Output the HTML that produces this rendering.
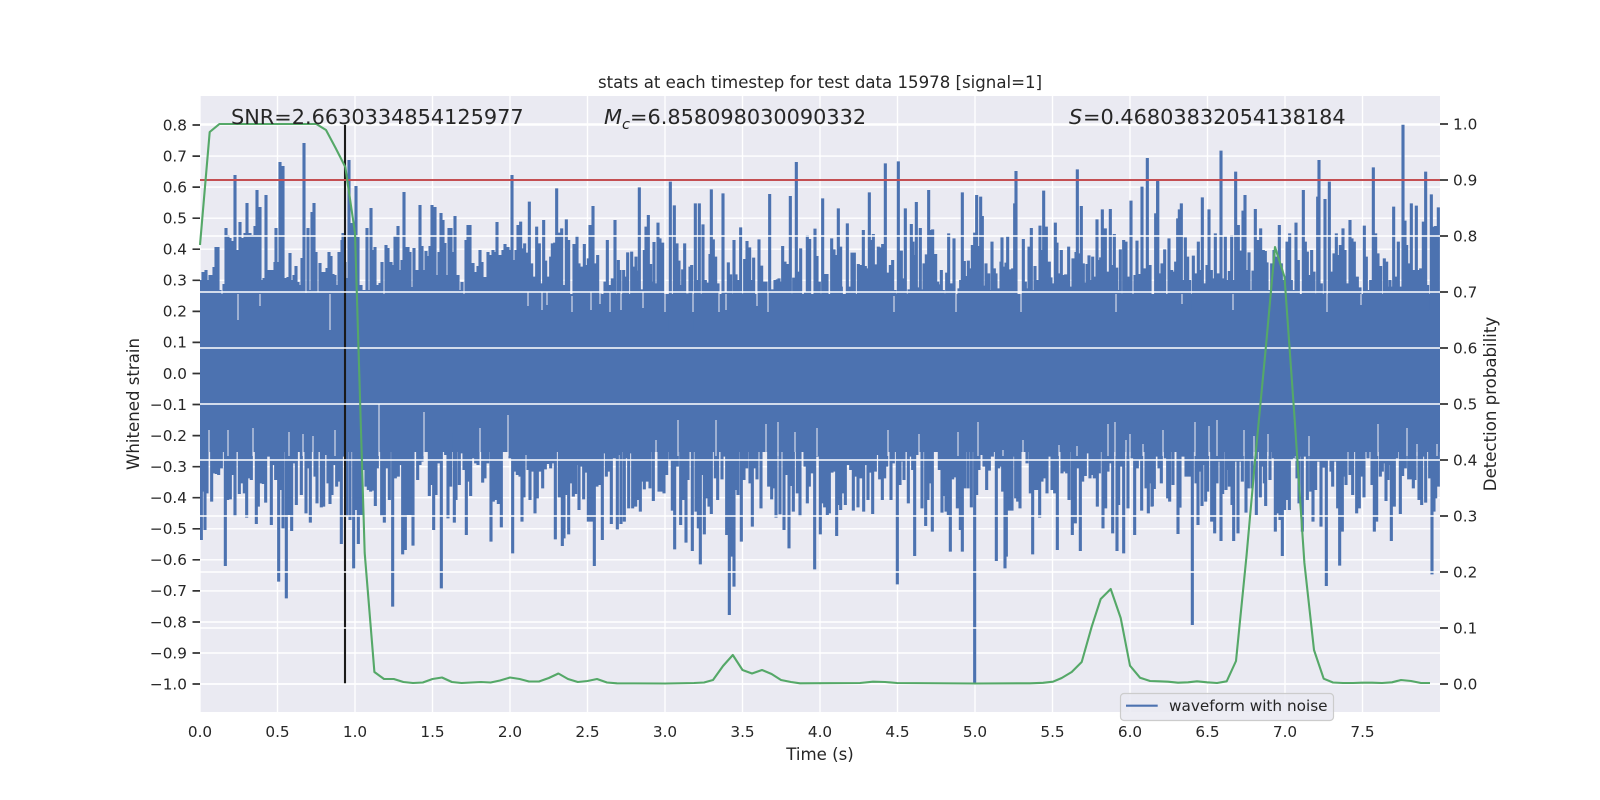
<!DOCTYPE html>
<html><head><meta charset="utf-8"><style>
html,body{margin:0;padding:0;background:#fff}
svg{display:block}
text{font-family:"DejaVu Sans",sans-serif;fill:#262626}
.tl{font-size:15.28px}
.lab{font-size:16.6px}
.big{font-size:20.83px}
</style></head><body>
<svg width="1600" height="800" viewBox="0 0 1600 800" xmlns="http://www.w3.org/2000/svg">
<defs><clipPath id="ax"><rect x="200" y="96" width="1240" height="616"/></clipPath></defs>
<rect width="1600" height="800" fill="#fff"/>
<rect x="200" y="96" width="1240" height="616" fill="#eaeaf2"/>
<path stroke="#fff" stroke-width="1.4" fill="none" d="M200 125H1440M200 156.100H1440M200 187.100H1440M200 218.200H1440M200 249.200H1440M200 280.300H1440M200 311.400H1440M200 342.400H1440M200 373.500H1440M200 404.500H1440M200 435.600H1440M200 466.700H1440M200 497.700H1440M200 528.800H1440M200 559.800H1440M200 590.900H1440M200 622H1440M200 653H1440M200 684H1440M200 96V712M277.500 96V712M355 96V712M432.500 96V712M510 96V712M587.500 96V712M665 96V712M742.500 96V712M820 96V712M897.500 96V712M975 96V712M1052.500 96V712M1130 96V712M1207.500 96V712M1285 96V712M1362.500 96V712"/>
<g clip-path="url(#ax)">
<rect x="200" y="294" width="1240" height="158" fill="#4c72b0"/>
<path stroke="#4c72b0" stroke-width="3.1" fill="none" d="M201 280V310M203 272V310M206 270V310M208 280V310M210 275V310M212 275V310M214 267V310M216 247V310M218 247V310M220 290V310M222 297V310M224 284V310M226 228V310M228 235V310M230 238V310M232 241V310M235 175V310M237 250V310M240 222V310M242 238V310M245 233V310M247 203V310M250 233V310M253 235V310M255 226V310M257 190V310M259 260V310M260 207V310M262 280V310M264 278V310M266 195V310M268 270V310M271 270V310M273 270V310M275 262V310M276 228V310M279 262V310M280 162V310M283 166V310M286 278V310M288 277V310M290 253V310M292 280V310M294 275V310M296 266V310M298 282V310M300 285V310M302 258V310M304 143V310M306 293V310M308 228V310M310 290V310M312 212V310M314 203V310M316 252V310M318 292V310M320 263V310M322 272V310M325 272V310M327 268V310M329 252V310M331 256V310M333 274V310M335 275V310M337 285V310M339 252V310M342 240V310M343 233V310M345 262V310M347 278V310M349 160V310M352 223V310M354 230V310M356 186V310M358 237V310M361 285V310M364 290V310M367 228V310M369 290V310M371 208V310M373 250V310M375 247V310M378 285V310M380 283V310M382 262V310M384 295V310M386 245V310M388 248V310M391 262V310M393 265V310M395 236V310M398 226V310M400 270V310M402 260V310M404 192V310M406 247V310M408 247V310M410 252V310M412 287V310M414 248V310M416 270V310M418 270V310M420 205V310M422 246V310M424 270V310M426 251V310M428 256V310M430 246V310M432 205V310M435 207V310M437 275V310M439 252V310M441 213V310M443 220V310M445 243V310M447 275V310M449 228V310M451 228V310M453 252V310M455 216V310M458 275V310M460 290V310M462 282V310M464 302V310M466 240V310M468 225V310M470 225V310M473 263V310M475 272V310M478 266V310M480 250V310M482 262V310M485 277V310M488 252V310M491 255V310M493 250V310M495 252V310M497 222V310M500 255V310M503 250V310M505 244V310M508 247V310M510 250V310M512 175V310M514 260V310M516 250V310M518 225V310"/>
<g transform="translate(520,130) scale(.33333)"><path stroke="#4c72b0" stroke-width="9.3" fill="none" d="M2 275V600M8 355V600M14 340V600M20 368V600M28 215V600M35 400V600M41 440V600M50 290V600M58 340V600M64 460V600M71 270V600M77 392V600M85 440V600M92 380V600M97 340V600M104 338V600M110 175V600M118 308V600M125 295V600M131 465V600M139 268V600M146 330V600M155 500V600M162 342V600M171 316V600M177 400V600M184 410V600M193 342V600M199 405V600M205 385V600M210 285V600M219 228V600M226 400V600M233 375V600M240 490V600M247 518V600M255 455V600M262 330V600M268 465V600M277 445V600M285 270V600M295 390V600M300 420V600M311 420V600M316 440V600M323 367V600M335 365V600M341 410V600M348 380V600M354 422V600M358 172V600M366 478V600M373 360V600M378 290V600M385 255V600M392 402V600M396 455V600M402 336V600M408 460V600M414 278V600M420 325V600M428 338V600M440 535V600M451 155V600M463 226V600M471 340V600M477 392V600M482 465V600M488 418V600M494 340V600M502 490V600M510 410V600M515 405V600M526 220V600M531 450V600M538 220V600M549 283V600M556 450V600M562 458V600M570 372V600M574 178V600M580 328V600M587 380V600M594 460V600M609 190V600M616 485V600M625 397V600M632 433V600M642 330V600M648 433V600M655 450V600M662 292V600M668 490V600M674 387V600M681 333V600M689 352V600M695 450V600M701 383V600M708 495V600M717 328V600M725 407V600M733 455V600M738 455V600M749 192V600M756 478V600M765 450V600M772 448V600M777 445V600M782 455V600M788 348V600M795 395V600M803 402V600M811 198V600M821 443V600M829 96V600M836 425V600M842 355V600M849 498V600M856 485V600M862 315V600M869 327V600M885 296V600M891 378V600M898 455V600M908 205V600M916 432V600M921 432V600M928 505V600M935 325V600M942 358V600M949 375V600M955 235V600"/></g>
<g transform="translate(840,130) scale(.33333)"><path stroke="#4c72b0" stroke-width="9.3" fill="none" d="M2 350V600M4 470V600M12 530V600M22 280V600M29 470V600M36 368V600M43 368V600M55 402V600M62 405V600M70 300V600M76 408V600M81 415V600M88 187V600M93 330V600M100 312V600M105 495V600M109 403V600M115 350V600M122 352V600M128 342V600M136 100V600M144 428V600M151 405V600M158 390V600M165 480V600M175 94V600M184 362V600M190 445V600M196 235V600M207 478V600M214 282V600M219 335V600M222 375V600M229 216V600M235 472V600M241 294V600M246 478V600M252 400V600M259 373V600M266 180V600M271 300V600M278 298V600M287 372V600M293 455V600M298 463V600M304 420V600M310 480V600M320 428V600M326 310V600M333 460V600M342 325V600M348 530V600M357 475V600M362 450V600M367 187V600M373 393V600M379 438V600M385 392V600M391 415V600M397 345V600M404 308V600M410 195V600M416 348V600M422 200V600M427 258V600M432 467V600M438 400V600M446 430V600M451 480V600M456 335V600M463 415V600M468 430V600M474 475V600M483 395V600M486 322V600M493 410V600M498 398V600M503 320V600M509 418V600M518 415V600M524 220V600M528 123V600M534 500V600M540 495V600M550 327V600M556 455V600M561 475V600M567 350V600M574 294V600M580 480V600M585 408V600M594 450V600M600 287V600M606 360V600M611 182V600M619 290V600M628 395V600M633 442V600M637 460V600M646 278V600M651 338V600M657 430V600M664 360V600M670 435V600M677 433V600M686 350V600M692 470V600M699 385V600M708 366V600M712 118V600M718 370V600M724 228V600M730 400V600M736 458V600M741 402V600M747 376V600M752 450V600M758 380V600M765 440V600M771 268V600M777 390V600M782 382V600M787 238V600M796 295V600M802 425V600M811 237V600M817 405V600M823 312V600M830 413V600M835 480V600M841 358V600M851 330V600M858 335V600M865 440V600M873 212V600M885 435V600M891 332V600M899 432V600M906 170V600M913 415V600M922 84V600M930 405V600M938 498V600M947 250V600M953 155V600M958 430V600"/></g>
<g transform="translate(1150,90) scale(.33333)"><path stroke="#4c72b0" stroke-width="9.3" fill="none" d="M0 525V660M6 615V660M18 370V660M23 270V660M30 610V660M36 520V660M44 478V660M50 630V660M57 445V660M65 540V660M72 545V660M77 515V660M83 385V660M88 358V660M94 340V660M100 570V660M106 442V660M113 500V660M119 570V660M130 497V660M136 550V660M145 455V660M150 540V660M157 322V660M165 580V660M171 525V660M177 358V660M184 540V660M190 565V660M196 430V660M205 550V660M213 182V660M219 565V660M226 440V660M231 570V660M238 543V660M245 435V660M250 570V660M257 245V660M265 405V660M272 482V660M279 362V660M285 315V660M290 540V660M297 487V660M303 600V660M309 542V660M316 357V660M323 450V660M332 415V660M340 480V660M346 483V660M351 517V660M358 600V660M365 520V660M372 480V660M379 500V660M388 405V660M394 520V660M403 570V660M411 455V660M419 430V660M424 570V660M430 600V660M438 398V660M445 510V660M450 640V660M460 300V660M466 455V660M472 485V660M478 555V660M485 480V660M492 545V660M498 610V660M503 320V660M507 210V660M514 580V660M525 327V660M531 650V660M538 275V660M546 545V660M552 490V660M559 430V660M565 495V660M571 465V660M579 415V660M585 480V660M592 580V660M600 390V660M606 445V660M613 455V660M622 560V660M630 592V660M636 650V660M643 407V660M649 500V660M655 600V660M662 570V660M670 232V660M677 430V660M684 490V660M692 528V660M698 620V660M703 505V660M710 515V660M715 590V660M720 570V660M725 590V660M731 350V660M737 560V660M745 455V660M752 590V660M759 102V660M765 392V660M770 465V660M776 520V660M784 340V660M790 540V660M799 347V660M805 540V660M812 535V660M820 395V660M827 245V660M833 585V660M844 313V660M850 410V660M857 408V660M863 522V660M865 352V660"/></g>
<g transform="translate(120,400) scale(.33333)"><path stroke="#4c72b0" stroke-width="9.3" fill="none" d="M244 420V100M249 275V100M255 390V100M261 280V100M267 140V100M275 305V100M283 220V100M289 222V100M296 225V100M304 205V100M316 498V100M323 300V100M331 298V100M338 225V100M345 350V100M351 155V100M358 282V100M367 250V100M373 280V100M380 353V100M387 235V100M394 240V100M400 130V100M409 372V100M415 320V100M424 250V100M430 252V100M437 308V100M445 170V100M454 375V100M461 195V100M467 240V100M476 545V100M482 270V100M489 385V100M499 595V100M507 345V100M515 393V100M522 190V100M529 315V100M536 135V100M544 285V100M550 110V100M558 340V100M564 205V100M571 368V100M578 120V100M585 230V100M591 310V100M597 145V100M604 322V100M611 320V100M618 165V100M624 250V100M630 312V100M636 285V100M642 195V100M650 260V100M657 245V100M664 432V100M671 170V100M680 350V100M690 360V100M701 505V100M708 330V100M715 432V100M723 345V100M730 210V100M738 260V100M745 270V100M752 275V100M759 272V100M766 318V100M772 205V100M785 350V100M793 368V100M800 205V100M808 300V100M818 620V100M826 235V100M835 230V100M840 195V100M848 463V100M856 450V100M864 345V100M871 345V100M879 437V100M886 135V100M893 240V100M900 195V100M906 185V100M918 100V100M928 288V100M934 255V100M941 390V100M948 285V100M955 190V100M964 565V100M971 155V100M977 165V100M984 355V100M992 260V100M1003 368V100M1008 300V100M1018 255V100M1025 160V100M1032 210V100M1039 405V100M1046 245V100M1052 288V100M1060 175V100M1067 190V100M1074 195V100M1080 135V100M1088 248V100M1095 235V100M1103 190V100M1113 425V100M1120 305V100M1127 300V100M1135 312V100M1144 382V100M1155 120V100M1170 175V100M1178 460V100M1185 215V100M1192 225V100"/></g>
<g transform="translate(520,420) scale(.33333)"><path stroke="#4c72b0" stroke-width="9.3" fill="none" d="M0 170V40M6 305V40M12 232V40M20 105V40M24 150V40M30 240V40M36 155V40M45 280V40M52 235V40M60 155V40M68 205V40M76 148V40M84 132V40M92 145V40M98 130V40M106 358V40M113 60V40M118 232V40M127 378V40M132 355V40M139 225V40M146 343V40M152 190V40M160 230V40M167 222V40M172 135V40M177 270V40M184 140V40M191 238V40M198 158V40M205 305V40M214 305V40M223 438V40M231 200V40M240 195V40M247 360V40M254 100V40M259 170V40M265 155V40M274 312V40M283 115V40M292 328V40M298 105V40M303 312V40M313 305V40M318 115V40M326 265V40M331 100V40M338 265V40M347 260V40M354 240V40M361 275V40M367 185V40M373 208V40M382 185V40M390 205V40M400 243V40M407 72V40M417 215V40M425 215V40M432 220V40M440 165V40M450 120V40M457 272V40M464 388V40M472 140V40M482 315V40M489 240V40M498 368V40M504 180V40M517 393V40M523 80V40M528 275V40M535 325V40M541 433V40M548 165V40M553 343V40M560 235V40M567 260V40M574 282V40M582 90V40M586 175V40M593 240V40M600 92V40M606 178V40M612 110V40M620 345V40M628 585V40M634 410V40M642 500V40M648 210V40M654 225V40M664 365V40M672 180V40M680 145V40M690 190V40M697 320V40M705 145V40M711 178V40M716 60V40M723 265V40M733 38V40M738 90V40M746 200V40M755 238V40M762 205V40M768 293V40M780 283V40M787 75V40M792 330V40M798 165V40M807 385V40M813 198V40M820 275V40M826 45V40M832 220V40M840 290V40M847 85V40M855 140V40M862 250V40M868 200V40M876 160V40M884 448V40M892 110V40M901 343V40M908 250V40M914 262V40M922 285V40M928 280V40M936 158V40M942 155V40M950 348V40M956 255V40"/></g>
<g transform="translate(840,420) scale(.33333)"><path stroke="#4c72b0" stroke-width="9.3" fill="none" d="M2 270V40M8 220V40M16 255V40M24 135V40M32 150V40M40 272V40M46 170V40M54 262V40M63 175V40M71 275V40M77 135V40M84 240V40M91 158V40M98 282V40M106 155V40M112 105V40M119 178V40M127 240V40M134 175V40M140 140V40M146 90V40M153 240V40M160 130V40M166 85V40M172 493V40M180 195V40M186 125V40M192 180V40M198 70V40M205 250V40M212 110V40M218 150V40M224 408V40M233 105V40M239 45V40M246 265V40M250 70V40M257 318V40M264 240V40M270 190V40M277 335V40M283 90V40M291 70V40M298 150V40M306 278V40M312 228V40M318 275V40M325 285V40M331 395V40M338 178V40M345 172V40M352 265V40M361 330V40M367 395V40M374 205V40M384 205V40M394 262V40M404 790V40M410 225V40M417 150V40M425 105V40M432 140V40M440 210V40M448 152V40M457 110V40M463 75V40M469 423V40M476 145V40M483 140V40M488 215V40M495 445V40M499 410V40M507 272V40M516 272V40M522 110V40M527 235V40M533 245V40M540 265V40M548 62V40M552 95V40M561 130V40M571 220V40M578 403V40M586 210V40M592 210V40M599 293V40M606 185V40M613 175V40M621 220V40M628 110V40M636 210V40M644 220V40M652 390V40M659 75V40M666 160V40M674 155V40M680 160V40M687 240V40M697 345V40M706 310V40M712 145V40M721 393V40M728 185V40M736 168V40M743 100V40M750 175V40M756 165V40M763 175V40M772 260V40M778 160V40M789 325V40M797 265V40M804 155V40M811 130V40M818 340V40M825 30V40M831 393V40M836 255V40M843 140V40M851 400V40M857 70V40M864 265V40M869 80V40M876 115V40M884 345V40M892 145V40M899 120V40M905 272V40M912 70V40M918 205V40M925 280V40M931 165V40M937 258V40"/></g>
<g transform="translate(1150,420) scale(.33333)"><path stroke="#4c72b0" stroke-width="9.3" fill="none" d="M0 190V40M6 260V40M13 207V40M20 110V40M27 145V40M34 190V40M46 115V40M53 235V40M59 245V40M65 88V40M69 195V40M74 95V40M84 342V40M90 263V40M96 110V40M102 110V40M108 170V40M116 170V40M120 170V40M127 615V40M138 190V40M144 315V40M150 155V40M156 258V40M162 135V40M167 245V40M173 215V40M179 75V40M185 305V40M194 340V40M201 190V40M206 125V40M213 363V40M218 222V40M224 90V40M228 210V40M233 150V40M238 200V40M246 255V40M251 363V40M258 125V40M264 340V40M270 125V40M277 185V40M288 278V40M295 205V40M300 120V40M306 205V40M313 50V40M319 285V40M331 232V40M337 140V40M343 190V40M347 258V40M354 40V40M360 180V40M366 95V40M370 115V40M376 335V40M383 280V40M390 300V40M397 408V40M404 270V40M410 240V40M418 270V40M424 118V40M430 115V40M436 108V40M441 175V40M447 250V40M451 110V40M457 335V40M465 110V40M472 240V40M478 50V40M482 215V40M489 305V40M497 210V40M506 125V40M513 320V40M522 143V40M529 498V40M535 120V40M543 155V40M548 200V40M555 125V40M563 265V40M569 437V40M577 335V40M584 170V40M588 195V40M593 80V40M600 165V40M608 225V40M614 75V40M620 280V40M628 265V40M636 170V40M642 232V40M648 70V40M654 115V40M660 85V40M666 195V40M673 335V40M680 305V40M691 170V40M697 155V40M702 130V40M708 243V40M714 180V40M718 135V40M724 363V40M733 260V40M740 115V40M745 68V40M751 282V40M758 168V40M766 145V40M776 178V40M783 178V40M790 205V40M795 180V40M802 70V40M807 240V40M815 255V40M821 110V40M827 248V40M835 95V40M839 175V40M846 463V40M852 275V40M857 235V40M860 70V40M865 200V40"/></g>
<path stroke="#eaeaf2" stroke-width="1.3" opacity=".8" fill="none" d="M528 292V306M542 292V310M547 292V305M572 296V312M591 292V310M600 292V304M610 292V312M621 292V310M643 292V308M665 292V312M693 292V312M719 292V312M726 294V310M757 292V306M768 292V312M894 296V312M956 294V312M1021 294V312M1116 294V312M1182 294V304M1233 294V310M1327 294V312M1361 294V305M330 294V330M238 294V320M260 294V306M209 430V452M228 430V456M253 428V456M289 432V456M303 434V456M313 436V452M335 430V456M379 404V456M424 412V456M480 428V452M508 415V456M656 440V456M678 420V456M716 420V456M766 424V456M778 422V456M795 432V452M817 428V456M888 430V456M919 434V456M958 432V456M978 422V456M1003 450V456M1023 440V456M1059 445V456M1077 446V456M1108 424V456M1115 422V456M1126 440V456M1130 434V456M1143 444V456M1163 430V456M1195 422V456M1209 426V456M1217 420V456M1244 430V456M1254 436V456M1268 434V456M1309 436V456M1378 424V456M1407 428V456M1417 444V456M1437 444V456"/>
</g>
<path stroke="#1a1a1a" stroke-width="2.1" fill="none" d="M345 124V684"/>
<path stroke="#fff" stroke-width="1.4" fill="none" d="M200 124H1440M200 180H1440M200 236H1440M200 292H1440M200 348H1440M200 404H1440M200 460H1440M200 516H1440M200 572H1440M200 628H1440M200 684H1440"/>
<path stroke="#c44e52" stroke-width="2.1" fill="none" d="M200 180H1440"/>
<path stroke="#55a868" stroke-width="2.1" fill="none" stroke-linejoin="round" d="M200 245L209.700 132L219.400 124L316.300 124L326 130L335.600 148L345.300 167L355 233L364.700 553L374.400 672L384 679L393.800 679L403.400 682L413 683L422.800 682.500L432.500 679L442 677.500L451.900 682L461.600 683L471 682.500L481 682L490.600 682.500L500 680.500L510 677.500L519.700 679L529 681.500L539 681.500L548.800 678L558.400 673.500L568 679L577.800 682L587.500 681L597 679L607 682.500L617 683.300L665 683.500L694 683L704 682.500L713 680L723 666L732.800 655L742.500 670L752 673.500L762 670L771.600 674L781 680L791 682L800 683.300L860 683L873 681.700L885 682L897 683L975 683.500L1030 683.300L1043 682.800L1053 681.700L1061.700 678L1071.700 672L1081.700 662L1091.700 626.700L1100.700 599L1110.700 589L1120.700 618L1130 665.700L1140 677.700L1150 681L1159 681.300L1168 681.700L1178 682.700L1188 682.300L1197 681.300L1207 682.300L1217 683L1226.700 681.300L1236 661L1246.500 556L1256 450L1265.600 350L1275 247L1284.500 277L1294.700 420L1304.400 563L1314 650L1323.700 678.700L1333 682.500L1343 683L1353 683L1362 682.700L1372 682.700L1382 683L1392 682.300L1401 680L1411 681L1421 683L1430 683"/>
<rect x="1120.500" y="693.500" width="213" height="27" rx="3.500" fill="#eaeaf2" fill-opacity=".85" stroke="#cccccc" stroke-width="1.2"/>
<path stroke="#4c72b0" stroke-width="2.1" d="M1126 705.700H1157.700"/>
<text x="1169" y="711" class="tl">waveform with noise</text>
<text x="820" y="88" class="lab" text-anchor="middle">stats at each timestep for test data 15978 [signal=1]</text>
<text x="231" y="124" class="big">SNR=2.6630334854125977</text>
<text y="124" class="big"><tspan x="604" font-style="italic">M</tspan><tspan x="622" y="129" font-size="14.6" font-style="italic">c</tspan><tspan x="630" y="124">=6.858098030090332</tspan></text>
<text y="124" class="big"><tspan x="1069" font-style="italic">S</tspan><tspan x="1083">=0.46803832054138184</tspan></text>
<path stroke="#333" stroke-width="1.7" fill="none" d="M192.500 125H200M192.500 156.100H200M192.500 187.100H200M192.500 218.200H200M192.500 249.200H200M192.500 280.300H200M192.500 311.400H200M192.500 342.400H200M192.500 373.500H200M192.500 404.500H200M192.500 435.600H200M192.500 466.700H200M192.500 497.700H200M192.500 528.800H200M192.500 559.800H200M192.500 590.900H200M192.500 622H200M192.500 653H200M192.500 684H200M1440 124H1448M1440 180H1448M1440 236H1448M1440 292H1448M1440 348H1448M1440 404H1448M1440 460H1448M1440 516H1448M1440 572H1448M1440 628H1448M1440 684H1448"/>
<g text-anchor="end">
<text x="187" y="130.500" class="tl">0.8</text><text x="187" y="161.500" class="tl">0.7</text><text x="187" y="192.500" class="tl">0.6</text><text x="187" y="223.500" class="tl">0.5</text><text x="187" y="254.500" class="tl">0.4</text><text x="187" y="285.500" class="tl">0.3</text><text x="187" y="316.500" class="tl">0.2</text><text x="187" y="347.500" class="tl">0.1</text><text x="187" y="379" class="tl">0.0</text><text x="187" y="410" class="tl">−0.1</text><text x="187" y="441" class="tl">−0.2</text><text x="187" y="472" class="tl">−0.3</text><text x="187" y="503" class="tl">−0.4</text><text x="187" y="534" class="tl">−0.5</text><text x="187" y="565" class="tl">−0.6</text><text x="187" y="596" class="tl">−0.7</text><text x="187" y="627.500" class="tl">−0.8</text><text x="187" y="658.500" class="tl">−0.9</text><text x="187" y="689.500" class="tl">−1.0</text>
</g>
<text x="1453" y="129.500" class="tl">1.0</text><text x="1453" y="185.500" class="tl">0.9</text><text x="1453" y="241.500" class="tl">0.8</text><text x="1453" y="297.500" class="tl">0.7</text><text x="1453" y="353.500" class="tl">0.6</text><text x="1453" y="409.500" class="tl">0.5</text><text x="1453" y="465.500" class="tl">0.4</text><text x="1453" y="521.500" class="tl">0.3</text><text x="1453" y="577.500" class="tl">0.2</text><text x="1453" y="633.500" class="tl">0.1</text><text x="1453" y="689.500" class="tl">0.0</text>
<g text-anchor="middle">
<text x="200" y="737" class="tl">0.0</text><text x="277.500" y="737" class="tl">0.5</text><text x="355" y="737" class="tl">1.0</text><text x="432.500" y="737" class="tl">1.5</text><text x="510" y="737" class="tl">2.0</text><text x="587.500" y="737" class="tl">2.5</text><text x="665" y="737" class="tl">3.0</text><text x="742.500" y="737" class="tl">3.5</text><text x="820" y="737" class="tl">4.0</text><text x="897.500" y="737" class="tl">4.5</text><text x="975" y="737" class="tl">5.0</text><text x="1052.500" y="737" class="tl">5.5</text><text x="1130" y="737" class="tl">6.0</text><text x="1207.500" y="737" class="tl">6.5</text><text x="1285" y="737" class="tl">7.0</text><text x="1362.500" y="737" class="tl">7.5</text>
<text x="820" y="760" class="lab">Time (s)</text>
<text transform="translate(139,404) rotate(-90)" class="lab">Whitened strain</text>
<text transform="translate(1496,404) rotate(-90)" class="lab">Detection probability</text>
</g>
</svg>
</body></html>
